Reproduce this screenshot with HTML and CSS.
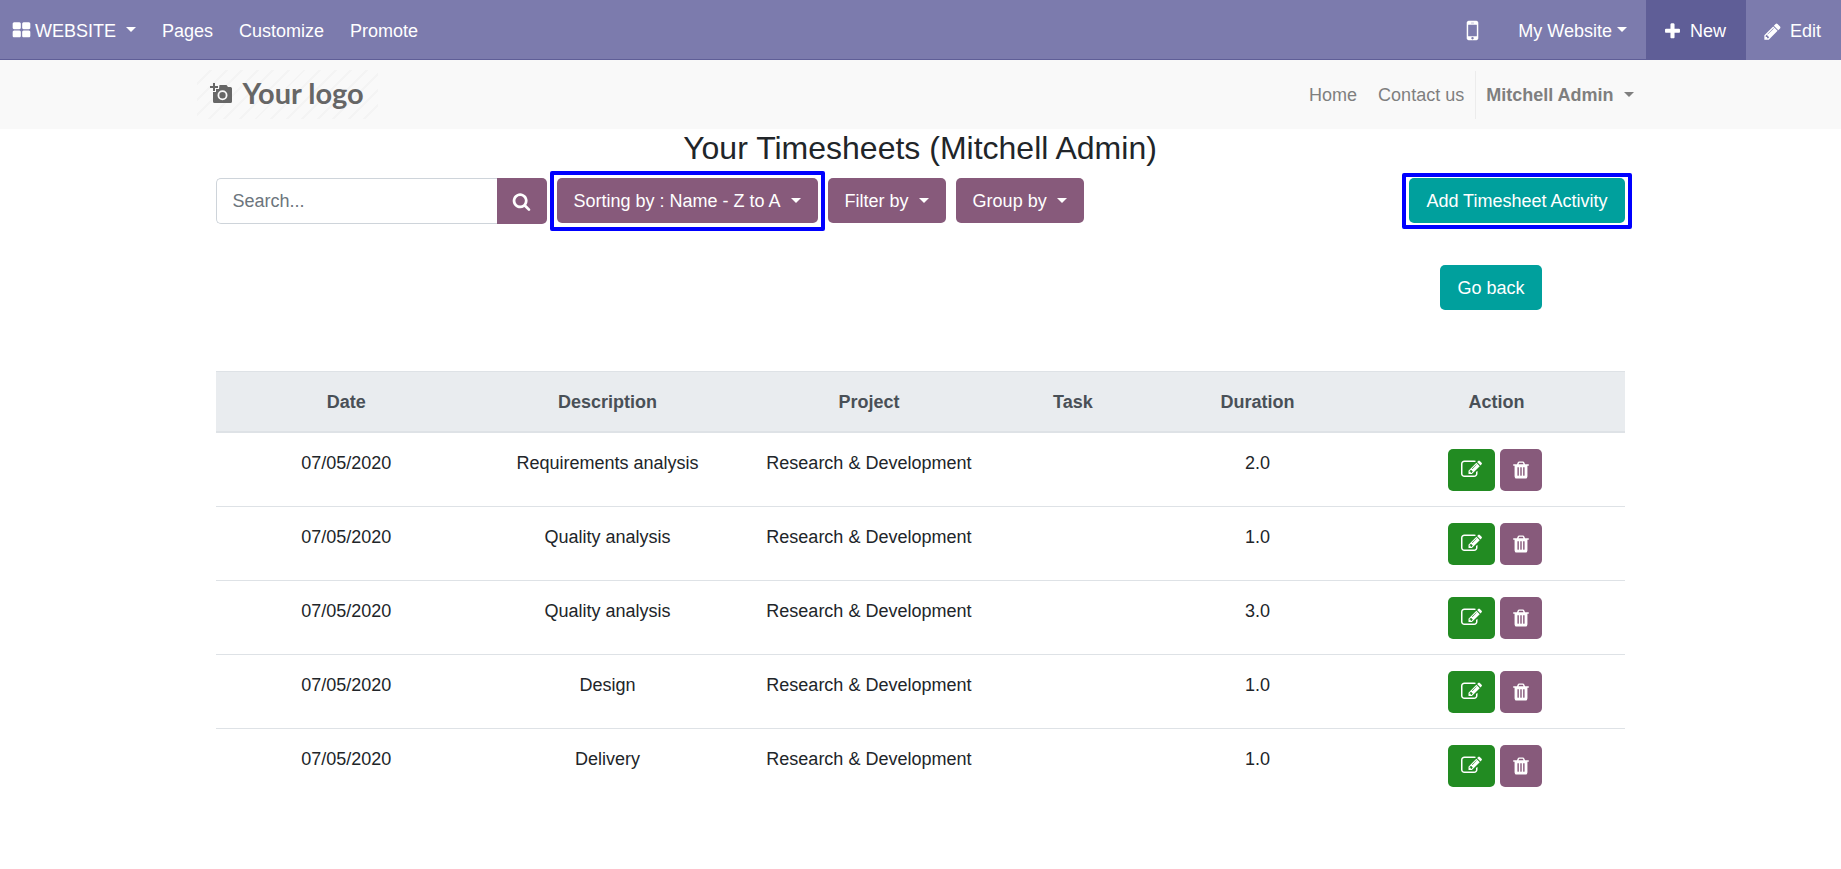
FILE: index.html
```html
<!DOCTYPE html>
<html lang="en">
<head>
<meta charset="utf-8">
<title>Your Timesheets</title>
<link rel="stylesheet" href="styles.css">
</head>
<body>
<svg class="sprite" aria-hidden="true">
  <symbol id="i-th" viewBox="0 0 1792 1792"><path d="M832 1024v384q0 52-38 90t-90 38h-512q-52 0-90-38t-38-90v-384q0-52 38-90t90-38h512q52 0 90 38t38 90zm0-768v384q0 52-38 90t-90 38h-512q-52 0-90-38t-38-90v-384q0-52 38-90t90-38h512q52 0 90 38t38 90zm896 768v384q0 52-38 90t-90 38h-512q-52 0-90-38t-38-90v-384q0-52 38-90t90-38h512q52 0 90 38t38 90zm0-768v384q0 52-38 90t-90 38h-512q-52 0-90-38t-38-90v-384q0-52 38-90t90-38h512q52 0 90 38t38 90z"/></symbol>
  <symbol id="i-mobile" viewBox="0 0 1792 1792"><path d="M976 1408q0-33-23.500-56.500t-56.500-23.500-56.500 23.500-23.500 56.500 23.500 56.500 56.500 23.500 56.500-23.500 23.500-56.500zm208-160v-704q0-13-9.500-22.500t-22.500-9.500h-512q-13 0-22.500 9.500t-9.500 22.500v704q0 13 9.500 22.500t22.500 9.500h512q13 0 22.500-9.500t9.500-22.500zm-192-848q0-16-16-16h-160q-16 0-16 16t16 16h160q16 0 16-16zm288-16v1024q0 52-38 90t-90 38h-512q-52 0-90-38t-38-90v-1024q0-52 38-90t90-38h512q52 0 90 38t38 90z"/></symbol>
  <symbol id="i-plus" viewBox="0 0 1792 1792"><path d="M1600 736v192q0 40-28 68t-68 28h-416v416q0 40-28 68t-68 28h-192q-40 0-68-28t-28-68v-416h-416q-40 0-68-28t-28-68v-192q0-40 28-68t68-28h416v-416q0-40 28-68t68-28h192q40 0 68 28t28 68v416h416q40 0 68 28t28 68z"/></symbol>
  <symbol id="i-pencil" viewBox="0 0 1792 1792"><path d="M491 1536l91-91-235-235-91 91v107h128v128h107zm523-928q0-22-22-22-10 0-17 7l-542 542q-7 7-7 17 0 22 22 22 10 0 17-7l542-542q7-7 7-17zm-54-192l416 416-832 832h-416v-416zm683 96q0 53-37 90l-166 166-416-416 166-165q36-38 90-38 53 0 91 38l235 234q37 39 37 91z"/></symbol>
  <symbol id="i-search" viewBox="0 0 1792 1792"><path d="M1216 832q0-185-131.500-316.500t-316.500-131.500-316.500 131.500-131.500 316.500 131.500 316.500 316.500 131.500 316.500-131.500 131.500-316.500zm512 832q0 52-38 90t-90 38q-54 0-90-38l-343-342q-179 124-399 124-143 0-273.500-55.500t-225-150-150-225-55.500-273.500 55.500-273.500 150-225 225-150 273.500-55.500 273.500 55.500 225 150 150 225 55.500 273.500q0 220-124 399l343 343q37 37 37 90z"/></symbol>
  <symbol id="i-edit" viewBox="0 0 1792 1792"><path d="M888 1184l116-116-152-152-116 116v56h96v96h56zm440-720q-16-16-33 1l-350 350q-17 17-1 33t33-1l350-350q17-17 1-33zm80 594v190q0 119-84.500 203.500t-203.500 84.500h-832q-119 0-203.500-84.500t-84.500-203.500v-832q0-119 84.500-203.500t203.500-84.500h832q63 0 117 25 15 7 18 23 3 17-9 29l-49 49q-14 14-32 8-23-6-45-6h-832q-66 0-113 47t-47 113v832q0 66 47 113t113 47h832q66 0 113-47t47-113v-126q0-13 9-22l64-64q15-15 35-7t20 29zm-96-738l288 288-672 672h-288v-288zm444 132l-92 92-288-288 92-92q28-28 68-28t68 28l152 152q28 28 28 68t-28 68z"/></symbol>
  <symbol id="i-trash" viewBox="0 0 1792 1792"><path d="M704 1376v-704q0-14-9-23t-23-9h-64q-14 0-23 9t-9 23v704q0 14 9 23t23 9h64q14 0 23-9t9-23zm256 0v-704q0-14-9-23t-23-9h-64q-14 0-23 9t-9 23v704q0 14 9 23t23 9h64q14 0 23-9t9-23zm256 0v-704q0-14-9-23t-23-9h-64q-14 0-23 9t-9 23v704q0 14 9 23t23 9h64q14 0 23-9t9-23zm-544-992h448l-48-117q-7-9-17-11h-317q-10 2-17 11zm928 32v64q0 14-9 23t-23 9h-96v948q0 83-47 143.500t-113 60.500h-832q-66 0-113-58.500t-47-141.500v-952h-96q-14 0-23-9t-9-23v-64q0-14 9-23t23-9h309l70-167q15-37 54-63t79-26h320q40 0 79 26t54 63l70 167h309q14 0 23 9t9 23z"/></symbol>
</svg>

<nav class="topbar" aria-label="Website tools">
  <button class="top-item brand" type="button"><svg class="icon"><use href="#i-th"/></svg>WEBSITE<span class="caret"></span></button>
  <a class="top-item" href="#">Pages</a>
  <a class="top-item" href="#">Customize</a>
  <a class="top-item" href="#">Promote</a>
  <div class="top-right">
    <button class="top-item mobile" type="button" aria-label="Mobile preview"><svg class="icon icon-lg"><use href="#i-mobile"/></svg></button>
    <button class="top-item site" type="button">My Website<span class="caret tight"></span></button>
    <button class="top-action new" type="button"><svg class="icon"><use href="#i-plus"/></svg>New</button>
    <button class="top-action" type="button"><svg class="icon"><use href="#i-pencil"/></svg>Edit</button>
  </div>
</nav>

<header class="header">
  <div class="container header-row">
    <a class="logo" href="#">
      <svg class="logo-icon" viewBox="0 0 22 20" aria-hidden="true"><path fill-rule="evenodd" d="M3 0h2v3h3v2h-3v3h-2v-3h-3v-2h3zM9.500 2h7l1.500 2h2.500a1.500 1.500 0 0 1 1.500 1.500v13a1.500 1.500 0 0 1-1.500 1.500h-16a1.500 1.500 0 0 1-1.500-1.500v-9.500h3v-3h3zM12.500 7.200a5 5 0 1 0 0 10a5 5 0 1 0 0-10zM12.500 9a3.200 3.200 0 1 1 0 6.400a3.200 3.200 0 1 1 0-6.400z"/></svg>
      Your logo
    </a>
    <nav class="menu" aria-label="Main">
      <a href="#">Home</a>
      <a href="#">Contact us</a>
      <button class="user" type="button">Mitchell Admin<span class="caret"></span></button>
    </nav>
  </div>
</header>

<main class="container">
  <h1 class="title">Your Timesheets (Mitchell Admin)</h1>
  <div class="toolbar">
    <form class="search" role="search">
      <input type="text" placeholder="Search..." aria-label="Search">
      <button type="button" aria-label="Search"><svg class="icon"><use href="#i-search"/></svg></button>
    </form>
    <button class="btn marked marked-sort" type="button">Sorting by : Name - Z to A<span class="caret"></span></button>
    <button class="btn" type="button">Filter by<span class="caret"></span></button>
    <button class="btn" type="button">Group by<span class="caret"></span></button>
    <a class="btn teal push marked marked-add" href="#">Add Timesheet Activity</a>
  </div>
  <div class="back-row"><a class="btn teal" href="#">Go back</a></div>

  <table class="sheet">
    <colgroup><col class="c-wide"><col class="c-wide"><col class="c-wide"><col class="c-task"><col class="c-dur"><col></colgroup>
    <thead>
      <tr><th>Date</th><th>Description</th><th>Project</th><th>Task</th><th>Duration</th><th>Action</th></tr>
    </thead>
    <tbody>
      <tr><td>07/05/2020</td><td>Requirements analysis</td><td>Research &amp; Development</td><td></td><td>2.0</td><td><div class="actions"><button class="act edit" type="button" aria-label="Edit"><svg class="icon"><use href="#i-edit"/></svg></button><button class="act" type="button" aria-label="Delete"><svg class="icon"><use href="#i-trash"/></svg></button></div></td></tr>
      <tr><td>07/05/2020</td><td>Quality analysis</td><td>Research &amp; Development</td><td></td><td>1.0</td><td><div class="actions"><button class="act edit" type="button" aria-label="Edit"><svg class="icon"><use href="#i-edit"/></svg></button><button class="act" type="button" aria-label="Delete"><svg class="icon"><use href="#i-trash"/></svg></button></div></td></tr>
      <tr><td>07/05/2020</td><td>Quality analysis</td><td>Research &amp; Development</td><td></td><td>3.0</td><td><div class="actions"><button class="act edit" type="button" aria-label="Edit"><svg class="icon"><use href="#i-edit"/></svg></button><button class="act" type="button" aria-label="Delete"><svg class="icon"><use href="#i-trash"/></svg></button></div></td></tr>
      <tr><td>07/05/2020</td><td>Design</td><td>Research &amp; Development</td><td></td><td>1.0</td><td><div class="actions"><button class="act edit" type="button" aria-label="Edit"><svg class="icon"><use href="#i-edit"/></svg></button><button class="act" type="button" aria-label="Delete"><svg class="icon"><use href="#i-trash"/></svg></button></div></td></tr>
      <tr><td>07/05/2020</td><td>Delivery</td><td>Research &amp; Development</td><td></td><td>1.0</td><td><div class="actions"><button class="act edit" type="button" aria-label="Edit"><svg class="icon"><use href="#i-edit"/></svg></button><button class="act" type="button" aria-label="Delete"><svg class="icon"><use href="#i-trash"/></svg></button></div></td></tr>
    </tbody>
  </table>
</main>
</body>
</html>
```
FILE: styles.css
```css
*, *::before, *::after { box-sizing: border-box; }

body {
  margin: 0;
  background: #fff;
  color: #212529;
  font-family: "Liberation Sans", Arial, sans-serif;
  font-size: 18px;
  line-height: 28px;
}

button, input { font: inherit; margin: 0; }
button { border: 0; background: none; color: inherit; cursor: pointer; }
a { color: inherit; text-decoration: none; }

.sprite { display: none; }
.icon { width: 19px; height: 19px; fill: currentColor; flex: none; }
.icon-lg { width: 27px; height: 27px; }

.caret {
  display: inline-block;
  border: 5px solid transparent;
  border-top-color: currentColor;
  border-bottom: 0;
  margin-left: 10px;
  vertical-align: 4px;
}
.caret.tight { margin-left: 5px; }

/* Website tools bar */
.topbar {
  display: flex;
  height: 60px;
  padding-left: 12px;
  background: #7c7bad;
  border-bottom: 1px solid #5f5e97;
  color: #fff;
}
.top-item { display: flex; align-items: center; padding: 3px 13px 0; white-space: nowrap; }
.top-item .caret { margin-bottom: 3px; }
.brand { padding-left: 0; }
.brand .icon { margin: 0 4px 1px 0; }
.top-right { display: flex; margin-left: auto; margin-bottom: -1px; }
.mobile { padding: 0 19px 0 0; }
.site { padding: 2px 19px 0 13px; }
.top-action { display: flex; align-items: center; gap: 8px; padding: 2px 20px 0 17px; background: #7c7bad; }
.top-action.new { background: #5f5e97; }

/* Site header */
.header { background: #f9f9f9; color: #7f7f7f; }
.container { width: 100%; max-width: 1440px; margin: 0 auto; padding: 0 16px 0 15px; }
.header-row { display: flex; align-items: center; justify-content: space-between; padding: 10px 7px 10px 0; }
.logo {
  display: flex;
  align-items: center;
  gap: 11px;
  height: 49px;
  margin-left: -4px;
  padding: 0 14px 3px 13px;
  background: repeating-linear-gradient(135deg, #f9f9f9 0 9px, #f4f4f4 9px 11px);
  color: #666;
  font: bold 29px/32px Lato, sans-serif;
}
.logo-icon { width: 22px; height: 20px; fill: currentColor; }
.menu { display: flex; align-items: center; gap: 21px; }
.menu a { padding-top: 1px; }
.user {
  height: 48px;
  padding: 1px 0 0 10px;
  margin-left: -10px;
  border-left: 1px solid #ececec;
  font-weight: bold;
}

/* Page content */
.title { margin: 0; padding-bottom: 10px; text-align: center; font-size: 32px; font-weight: 400; line-height: 39px; }
.toolbar { display: flex; align-items: flex-start; gap: 10px; }
.search { display: flex; flex: 0 0 331px; height: 46px; }
.search input {
  flex: 1;
  min-width: 0;
  padding: 0 16px;
  border: 1px solid #ced4da;
  border-right: 0;
  border-radius: 5px 0 0 5px;
  background: #fff;
  outline: 0;
}
.search input::placeholder { color: #6c757d; opacity: 1; }
.search button {
  display: flex;
  align-items: center;
  justify-content: center;
  width: 50px;
  padding: 0;
  border-radius: 0 5px 5px 0;
  background: #875a7b;
  color: #fff;
}
.btn {
  position: relative;
  height: 45px;
  padding: 9px 17px 8px;
  border-radius: 5px;
  background: #875a7b;
  color: #fff;
  white-space: nowrap;
}
.teal { background: #00a09d; }
.push { margin-left: auto; }
.marked::after { content: ""; position: absolute; border: 4px solid #00f; border-radius: 2px; }
.marked-sort::after { inset: -7px -7px -8px; }
.marked-add::after { inset: -5px -7px -6px; }
.back-row { display: flex; justify-content: flex-end; padding: 41px 83px 61px 0; }

/* Timesheet lines */
.sheet { width: 100%; border-collapse: collapse; table-layout: fixed; text-align: center; }
.c-wide { width: 18.55%; }
.c-task { width: 10.4%; }
.c-dur { width: 15.8%; }
.sheet th { padding: 16px 16px 15px; background: #e9ecef; color: #495057; border-top: 1px solid #dee2e6; border-bottom: 2px solid #dee2e6; }
.sheet td { padding: 16px 8px 15px; vertical-align: top; border-top: 1px solid #dee2e6; }
.actions { display: flex; justify-content: center; gap: 5px; padding-right: 3px; }
.act {
  display: flex;
  align-items: center;
  justify-content: center;
  width: 42px;
  height: 42px;
  padding: 0;
  border-radius: 5px;
  background: #875a7b;
  color: #fff;
}
.act .icon { width: 20px; height: 20px; }
.act.edit { width: 47px; padding-bottom: 2px; background: #228b22; }
.act.edit .icon { width: 21px; height: 21px; }
```
